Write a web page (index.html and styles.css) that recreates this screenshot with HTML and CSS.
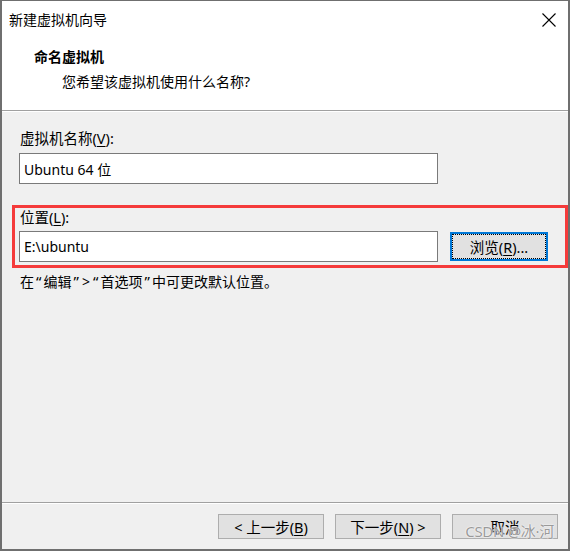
FILE: index.html
```html
<!DOCTYPE html>
<html lang="zh-CN">
<head>
<meta charset="utf-8">
<title>新建虚拟机向导</title>
<link rel="stylesheet" href="styles.css">
</head>
<body>
<div class="window">
  <div class="header">
    <div class="titlebar">
      <span class="title">新建虚拟机向导</span>
      <span class="close">
        <svg width="14" height="14" viewBox="0 0 14 14"><path d="M0.5 0.5 L13.5 13.5 M13.5 0.5 L0.5 13.5" stroke="#000" stroke-width="1.1" fill="none"/></svg>
      </span>
    </div>
    <div class="heading">命名虚拟机</div>
    <div class="subheading">您希望该虚拟机使用什么名称?</div>
  </div>
  <div class="content">
    <div class="label first">虚拟机名称(<u>V</u>):</div>
    <div class="textbox">Ubuntu 64 位</div>
    <div class="group">
      <div class="label">位置(<u>L</u>):</div>
      <div class="row">
        <div class="textbox narrow">E:\ubuntu</div>
        <div class="btn focus"><span class="focusrect">浏览(<u>R</u>)...</span></div>
      </div>
    </div>
    <div class="hint">在<span class="q">“</span>编辑<span class="q">”</span><span class="q gt">&gt;</span><span class="q">“</span>首选项<span class="q">”</span>中可更改默认位置。</div>
  </div>
  <div class="footer">
    <div class="btn wide">&lt; 上一步(<u>B</u>)</div>
    <div class="btn wide">下一步(<u>N</u>) &gt;</div>
    <div class="btn wide">取消</div>
  </div>
  <div class="watermark">CSDN @冰·河</div>
</div>
</body>
</html>
```
FILE: styles.css
```css
* { box-sizing: border-box; }
html, body { margin: 0; padding: 0; }
body {
  font-family: "Noto Sans", "Noto Sans CJK SC", sans-serif;
  font-size: 14px;
  color: #000;
  background: #fff;
}
.window {
  position: relative;
  width: 570px;
  height: 551px;
  border: 2px solid #6f6f6f;
  border-top-width: 1px;
  display: flex;
  flex-direction: column;
  background: #f0f0f0;
}
.header {
  background: #fff;
  height: 110px;
  border-bottom: 1px solid #a0a0a0;
  flex: none;
}
.titlebar {
  height: 38px;
  display: flex;
  align-items: center;
  justify-content: space-between;
  padding: 0 12px 0 7px;
}
.title { line-height: 18px; }
.close { width: 14px; height: 14px; display: flex; }
.heading {
  font-weight: bold;
  margin-left: 32px;
  margin-top: 9px;
  line-height: 18px;
}
.subheading {
  margin-left: 60px;
  margin-top: 7px;
  line-height: 18px;
}
.content {
  flex: 1;
  padding: 0 0 0 17px;
  border-top: 1px solid #fff;
}
.label { line-height: 16px; padding-left: 1px; font-size: 14.5px; }
.label.first { margin-top: 18px; }
u { text-decoration: underline; text-underline-offset: 2px; text-decoration-thickness: 1px; }
.textbox {
  margin-top: 7px;
  width: 419px;
  height: 31px;
  background: #fff;
  border: 1px solid #7a7a7a;
  padding-left: 4px;
  display: flex;
  align-items: center;
}
.group {
  margin: 21px 0 0 -7px;
  width: 556px;
  border: 3px solid #f53b3b;
  padding: 1px 0 3px 4px;
}
.group .label { padding-left: 1px; }
.row {
  display: flex;
  align-items: center;
  gap: 12px;
  margin-top: 6px;
}
.row .textbox { margin-top: 0; }
.btn {
  background: #e1e1e1;
  border: 1px solid #adadad;
  display: flex;
  align-items: center;
  justify-content: center;
  line-height: 16px;
  font-size: 14.5px;
}
.btn.focus {
  width: 98px;
  height: 29px;
  border: 2px solid #0078d7;
  padding: 0;
}
.focusrect {
  width: 100%;
  height: 100%;
  border: 1px dotted #000;
  display: flex;
  align-items: center;
  justify-content: center;
}
.hint {
  margin-top: 5px;
  line-height: 16px;
  padding-left: 1px;
  font-family: "Noto Sans CJK SC", sans-serif;
}
.hint .q {
  display: inline-block;
  width: 9.5px;
  text-align: center;
  font-family: "Noto Sans", sans-serif;
  font-size: 15px;
}
.hint .q.gt { width: 10px; font-size: 14px; }
.footer {
  flex: none;
  height: 47px;
  border-top: 1px solid #a0a0a0;
  box-shadow: inset 0 1px 0 #fff;
  display: flex;
  justify-content: flex-end;
  align-items: flex-start;
  gap: 11px;
  padding: 11px 10px 0 0;
}
.btn.wide { width: 106px; height: 25px; }
.watermark {
  position: absolute;
  right: 14px;
  bottom: 8px;
  font-size: 15px;
  color: #9a9a9a;
  text-shadow: 0 0 1px #fff, 0 0 2px #fff;
  letter-spacing: -0.3px;
}
```
